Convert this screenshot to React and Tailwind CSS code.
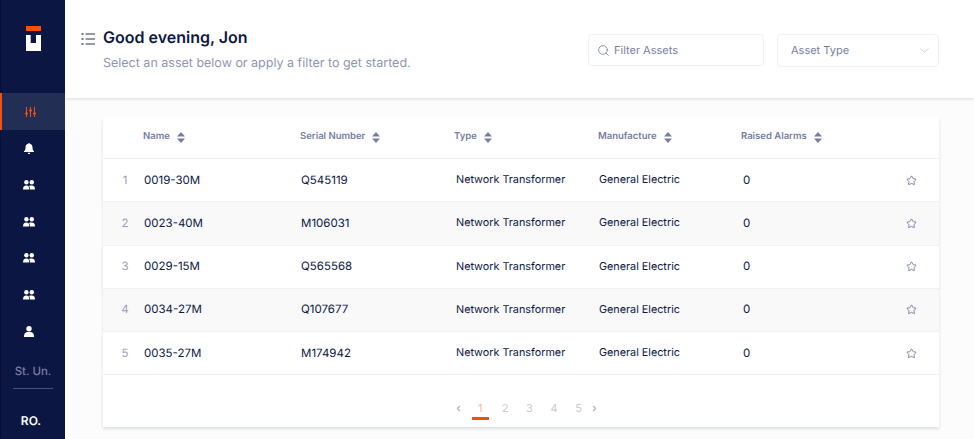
import React from "react";
import { Search, ChevronDown, ChevronLeft, ChevronRight, Star } from "lucide-react";

const assets = [
  { name: "0019-30M", serial: "Q545119" },
  { name: "0023-40M", serial: "M106031" },
  { name: "0029-15M", serial: "Q565568" },
  { name: "0034-27M", serial: "Q107677" },
  { name: "0035-27M", serial: "M174942" },
];

const columns = ["Name", "Serial Number", "Type", "Manufacture", "Raised Alarms"];

function Logo() {
  return (
    <svg width="15" height="25" viewBox="0 0 15 25">
      <rect x="0" y="0" width="15" height="5" fill="#f4500f" />
      <path d="M0 9h4.700v8H10V9h5v16H0z" fill="#fff" />
    </svg>
  );
}

function SortIcon() {
  return (
    <svg width="8" height="11" viewBox="0 0 8 11" className="fill-[#767e9f]">
      <path d="M4 0l4 4.400H0z" />
      <path d="M4 11L0 6.600h8z" />
    </svg>
  );
}

function SlidersIcon() {
  return (
    <svg width="11" height="10" viewBox="0 0 11 10" stroke="#f4500f" strokeWidth="1" fill="none">
      <path d="M1.500 0v10M5.500 0v10M9.500 0v10" />
      <path d="M0 6.500h3M4 3.500h3M8 6.500h3" strokeWidth="1.400" />
    </svg>
  );
}

function BellIcon() {
  return (
    <svg width="10" height="11" viewBox="0 0 10 11" fill="#fff">
      <path d="M5 0c.5 0 .8.3.8.8 1.900.4 2.700 1.900 2.700 3.600 0 2 .5 3 1.500 3.800v.7H0v-.7c1-.8 1.500-1.800 1.500-3.800 0-1.700.8-3.200 2.700-3.600C4.200.3 4.500 0 5 0z" />
      <path d="M3.700 9.700h2.600C6.200 10.500 5.700 11 5 11s-1.200-.5-1.300-1.300z" />
    </svg>
  );
}

function PeopleIcon() {
  return (
    <svg width="12" height="10" viewBox="0 0 12 10" fill="#fff">
      <circle cx="3.400" cy="2.300" r="2.200" />
      <circle cx="8.800" cy="2.300" r="2.200" />
      <path d="M0 9.600c0-2.600 1-4 3.300-4s3 1.400 3 4z" />
      <path d="M7 9.600c.1-1.600-.3-2.800-1-3.600.6-.4 1.500-.5 2.700-.5 2.300 0 3.300 1.500 3.300 4.100z" />
    </svg>
  );
}

function PersonIcon() {
  return (
    <svg width="10" height="11" viewBox="0 0 10 11" fill="#fff">
      <circle cx="5" cy="2.800" r="2.700" />
      <path d="M0 11c0-2.800.6-4.600 3.500-5h3c2.900.4 3.500 2.200 3.500 5z" />
    </svg>
  );
}

function NavIcon({ children, active }) {
  return (
    <div className={`h-[36.5px] flex items-center justify-center ${active ? "bg-[#232e55] border-l-2 border-[#f4500f] -ml-px pr-[7px] pt-[1.5px]" : "pr-[8px] pt-[2px]"}`}>
      {children}
    </div>
  );
}

function Sidebar() {
  return (
    <aside className="w-[65px] shrink-0 h-full bg-[#0b1742] flex flex-col border-l border-[#081135]">
      <div className="h-[93px] pt-[26px] flex justify-center">
        <Logo />
      </div>
      <NavIcon active><SlidersIcon /></NavIcon>
      <NavIcon><BellIcon /></NavIcon>
      <NavIcon><PeopleIcon /></NavIcon>
      <NavIcon><PeopleIcon /></NavIcon>
      <NavIcon><PeopleIcon /></NavIcon>
      <NavIcon><PeopleIcon /></NavIcon>
      <NavIcon><PersonIcon /></NavIcon>
      <div className="mt-[12px] ml-[12px] mr-[12px] pb-[7px] border-b border-[#4a5374] text-center text-[11.5px] leading-5 font-medium text-[#767e9f]">
        St. Un.
      </div>
      <div className="mt-[22px] pr-[4px] text-center text-[12px] leading-5 font-semibold text-white">RO.</div>
    </aside>
  );
}

function Header() {
  return (
    <header className="h-[98px] shrink-0 bg-white shadow-[0_1px_3px_rgba(30,40,80,0.16)] flex pl-[16px] pr-[35px] z-10">
      <svg width="14" height="14" viewBox="0 0 14 14" className="mt-[32px] mr-[8px] text-[#6f7796]" fill="none" stroke="currentColor" strokeWidth="1.500">
        <path d="M4.500 2h9.500M4.500 7h9.500M4.500 12h9.500" />
        <path d="M0.500 2h2M0.500 7h2M0.500 12h2" strokeWidth="2.200" />
      </svg>
      <div className="pt-[26px] flex-1">
        <h1 className="text-[16px] leading-[22px] font-semibold text-[#0b1742]">Good evening, Jon</h1>
        <p className="mt-[6px] text-[12.5px] leading-5 text-[#8f96b0]">Select an asset below or apply a filter to get started.</p>
      </div>
      <div className="pt-[34px] flex gap-[13px] items-start">
        <div className="w-[176px] h-[32px] border border-[#f0f1f4] rounded-sm flex items-center pl-[8px] gap-[4px] text-[11px] text-[#767e9f]">
          <Search size={13} strokeWidth={1.500} className="text-[#767e9f]" />
          Filter Assets
        </div>
        <div className="w-[162px] h-[33px] border border-[#f0f1f4] rounded-sm flex items-center justify-between pl-[13px] pr-[6px] text-[11px] text-[#767e9f]">
          Asset Type
          <ChevronDown size={15} strokeWidth={1} className="text-[#b8bccb]" />
        </div>
      </div>
    </header>
  );
}

function AssetTable() {
  return (
    <section className="mt-[19px] ml-[38px] w-[836px] h-[310px] bg-white shadow-[0_2px_3px_rgba(30,40,80,0.14)] flex flex-col">
      <div className="h-[42px] shrink-0 grid grid-cols-[40px_157px_154px_144px_143px_1fr] items-center border-b border-[#f0f1f4]">
        <div />
        {columns.map((col) => (
          <div key={col} className="flex items-center gap-[7px] text-[9.5px] font-semibold text-[#767e9f]">
            {col}
            <SortIcon />
          </div>
        ))}
      </div>
      {assets.map((asset, i) => (
        <div
          key={asset.name}
          className={`h-[43.25px] shrink-0 grid grid-cols-[41px_157px_155px_143px_144px_1fr] items-center border-b border-[#f0f1f4] text-[10.8px] text-[#0b1742] ${i % 2 === 1 ? "bg-[#f9f9f9]" : ""}`}
        >
          <div className="text-center pl-[3px] text-[11.5px] text-[#9a9fb5]">{i + 1}</div>
          <div className="text-[11.5px]">{asset.name}</div>
          <div className="text-[11.5px]">{asset.serial}</div>
          <div>Network Transformer</div>
          <div>General Electric</div>
          <div className="flex items-center justify-between pr-[22px]">
            <span className="text-[11.5px]">0</span>
            <Star size={11} className="text-[#767e9f]" />
          </div>
        </div>
      ))}
      <div className="flex-1 flex justify-center pt-[25px] pl-[11px]">
        <div className="flex items-start text-[11px] leading-[16px] text-[#c9cad0]">
          <ChevronLeft size={9} className="mt-[4px] mr-[8.500px] text-[#b0b2bb]" strokeWidth={3} />
          <div className="w-[17px] h-[20px] text-center text-[#fbb79b] border-b-[3px] border-[#f4500f]">1</div>
          <div className="w-[24.500px] ml-[4px] text-center">2</div>
          <div className="w-[24.500px] text-center">3</div>
          <div className="w-[24.500px] text-center">4</div>
          <div className="w-[24.500px] text-center">5</div>
          <ChevronRight size={9} className="mt-[4px] -ml-px text-[#b0b2bb]" strokeWidth={3} />
        </div>
      </div>
    </section>
  );
}

export default function App() {
  return (
    <div className="w-[974px] h-[439px] overflow-hidden flex bg-[#fcfcfc] font-['Inter',sans-serif] [text-rendering:geometricPrecision]">
      <Sidebar />
      <main className="flex-1 min-w-0 flex flex-col">
        <Header />
        <AssetTable />
      </main>
    </div>
  );
}
